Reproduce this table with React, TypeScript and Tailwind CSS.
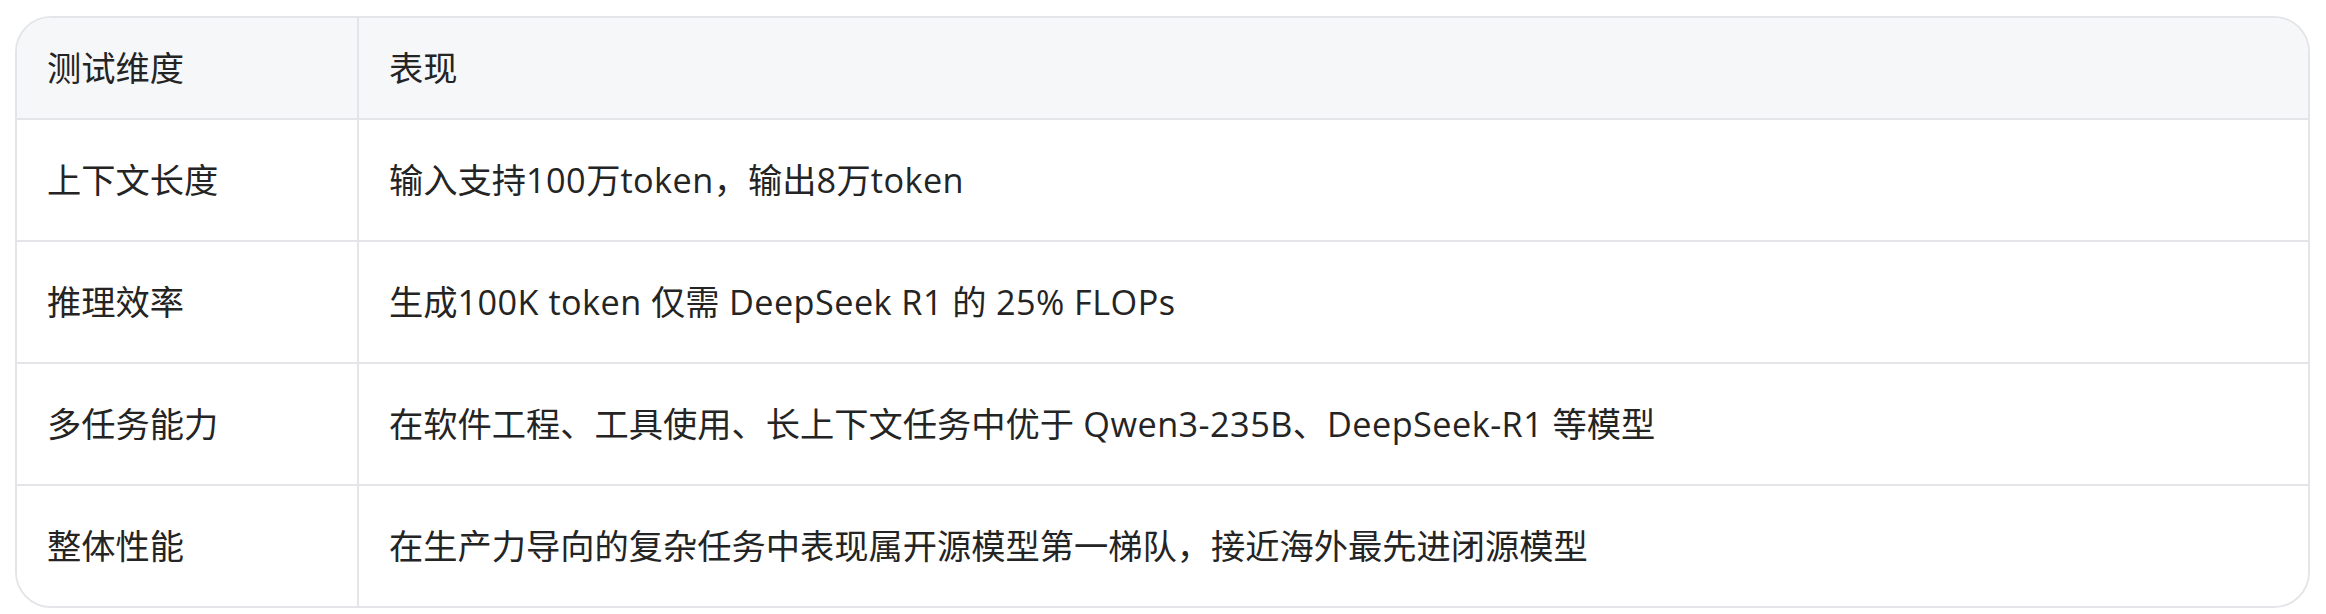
import React from "react";

const rows: [string, string][] = [
  ["上下文长度", "输入支持100万token，输出8万token"],
  ["推理效率", "生成100K token 仅需 DeepSeek R1 的 25% FLOPs"],
  ["多任务能力", "在软件工程、工具使用、长上下文任务中优于 Qwen3-235B、DeepSeek-R1 等模型"],
  ["整体性能", "在生产力导向的复杂任务中表现属开源模型第一梯队，接近海外最先进闭源模型"],
];

function Mixed({ text }: { text: string }) {
  const parts = text.match(/[\u3000-\u9fff\uff00-\uffef]+|[^\u3000-\u9fff\uff00-\uffef]+/g) || [];
  return (
    <span>
      {parts.map((p, i) =>
        /[\u3000-\u9fff\uff00-\uffef]/.test(p) ? (
          <span key={i}>{p}</span>
        ) : (
          <span key={i} className="tracking-[0.45px]">
            {p}
          </span>
        )
      )}
    </span>
  );
}

export default function App() {
  return (
    <div
      className="bg-white w-[2326px] h-[614px] pl-[15px] pr-[16px] pt-[16px]"
      style={{ fontFamily: '"Open Sans", "Noto Sans CJK SC", sans-serif' }}
    >
      <div className="border-2 border-[#e4e5e9] rounded-[36px] overflow-hidden text-[34.25px] text-[#242424]">
        <div className="grid grid-cols-[342px_1fr] bg-[#f6f7f9] border-b-2 border-[#e4e5e9] h-[102px]">
          <div className="flex items-center px-[30px] border-r-2 border-[#e4e5e9]">测试维度</div>
          <div className="flex items-center px-[30px]">表现</div>
        </div>
        {rows.map(([a, b], i) => (
          <div
            key={i}
            className={
              i < rows.length - 1
                ? "grid grid-cols-[342px_1fr] bg-white border-b-2 border-[#e4e5e9] h-[122px]"
                : "grid grid-cols-[342px_1fr] bg-white h-[120px]"
            }
          >
            <div className="flex items-center px-[30px] border-r-2 border-[#e4e5e9]">{a}</div>
            <div className="flex items-center px-[30px]">
              <Mixed text={b} />
            </div>
          </div>
        ))}
      </div>
    </div>
  );
}
